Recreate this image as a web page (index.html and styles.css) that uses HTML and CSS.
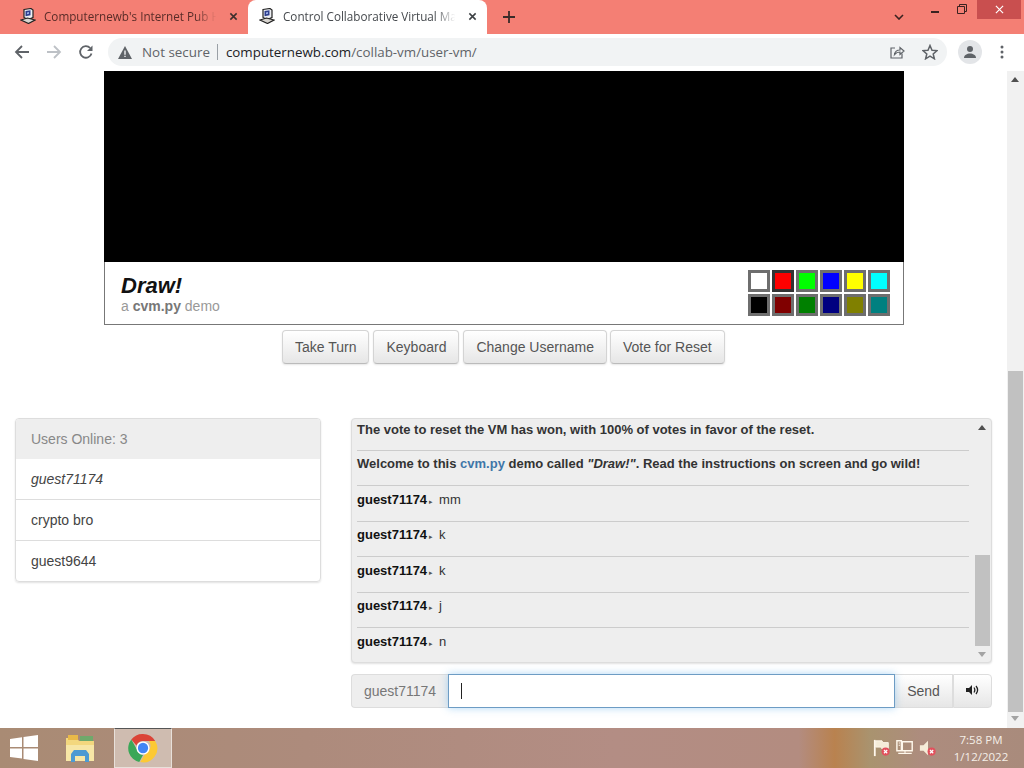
FILE: index.html
```html
<!DOCTYPE html>
<html lang="en">
<head>
    <meta charset="UTF-8">
    <title>Control Collaborative Virtual Machine</title>
    <link rel="stylesheet" href="styles.css">
</head>
<body>
    <div class="tabstrip">
        <div class="tab">
            <svg class="favicon" viewBox="0 0 16 16"><path d="M4 1.500 11 .5l2 1.500v7.500L8 11.500 4 9.500z" fill="#eef0f4" stroke="#222" stroke-width="1.200"/><path d="M5.500 3 10.500 2.300v5L5.500 8.300z" fill="#2f3f8f"/><path d="M7 4.500 9 4v1.800L7 6.300z" fill="#9fb4ea"/><path d="M1 12 7.500 10l7.500 2-6.500 3.500z" fill="#d9d5d0" stroke="#222" stroke-width="1.200"/></svg>
            <span class="tab-title">Computernewb's Internet Pub H</span>
            <svg class="tab-close" viewBox="0 0 10 10"><path d="M1.500 1.500l7 7M8.500 1.500l-7 7" stroke="#3c2f2d" stroke-width="1.700"/></svg>
        </div>
        <div class="tab tab-active">
            <svg class="favicon" viewBox="0 0 16 16"><path d="M4 1.500 11 .5l2 1.500v7.500L8 11.500 4 9.500z" fill="#eef0f4" stroke="#222" stroke-width="1.200"/><path d="M5.500 3 10.500 2.300v5L5.500 8.300z" fill="#2f3f8f"/><path d="M7 4.500 9 4v1.800L7 6.300z" fill="#9fb4ea"/><path d="M1 12 7.500 10l7.500 2-6.500 3.500z" fill="#d9d5d0" stroke="#222" stroke-width="1.200"/></svg>
            <span class="tab-title">Control Collaborative Virtual Ma</span>
            <svg class="tab-close" viewBox="0 0 10 10"><path d="M1.500 1.500l7 7M8.500 1.500l-7 7" stroke="#3c4043" stroke-width="1.700"/></svg>
        </div>
        <svg class="new-tab" viewBox="0 0 12 12"><path d="M6 0v12M0 6h12" stroke="#3a2b29" stroke-width="1.800"/></svg>
        <div class="window-controls">
            <svg class="tab-search" viewBox="0 0 10 6"><path d="M1 1l4 4 4-4" fill="none" stroke="#3a2220" stroke-width="1.600"/></svg>
            <svg class="win-min" viewBox="0 0 8 2"><path d="M0 1h8" stroke="#3a2220" stroke-width="2"/></svg>
            <svg class="win-restore" viewBox="0 0 10 10"><path d="M.5 2.500h7v7h-7zM2.500 2.500v-2h7v7h-2" fill="none" stroke="#3a2220"/></svg>
            <div class="win-close"><svg viewBox="0 0 10 10"><path d="M1 1l8 8M9 1l-8 8" stroke="#fff" stroke-width="1.300"/></svg></div>
        </div>
    </div>

    <div class="toolbar">
        <svg class="nav-icon" viewBox="0 0 16 16"><path d="M15 8H2M8 2 2 8l6 6" fill="none" stroke="#5f6368" stroke-width="1.800"/></svg>
        <svg class="nav-icon" viewBox="0 0 16 16"><path d="M1 8h13M8 2l6 6-6 6" fill="none" stroke="#bdc1c6" stroke-width="1.800"/></svg>
        <svg class="nav-icon" viewBox="0 0 16 16"><path d="M13.500 9.500A5.800 5.800 0 1 1 12.200 4" fill="none" stroke="#5f6368" stroke-width="1.800"/><path d="M14.500 1.500v5.500H9z" fill="#5f6368"/></svg>
        <div class="omnibox">
            <svg class="warn-icon" viewBox="0 0 14 13"><path d="M7 0 14 13H0z" fill="#5f6368"/><path d="M6.300 4.500h1.400v4.200H6.300zM6.300 9.700h1.400v1.400H6.300z" fill="#f1f3f4"/></svg>
            <span class="not-secure">Not secure</span>
            <span class="omni-sep"></span>
            <span class="url">computernewb.com<span class="url-path">/collab-vm/user-vm/</span></span>
            <svg class="share-icon" viewBox="0 0 16 16"><path d="M13 9.500V14H2V4h4" fill="none" stroke="#5f6368" stroke-width="1.200"/><path d="M5.500 10.500C6 7.500 8 6 11 6V3.500L15 7l-4 3.500V8c-2.200 0-4 .8-5.500 2.500z" fill="none" stroke="#5f6368" stroke-width="1.200"/></svg>
            <svg class="star-icon" viewBox="0 0 16 16"><path d="M8 1.500 10 6.200l5 .4-3.800 3.300 1.200 4.900L8 12.200l-4.400 2.600 1.200-4.900L1 6.600l5-.4z" fill="none" stroke="#5f6368" stroke-width="1.500"/></svg>
        </div>
        <div class="avatar"><svg viewBox="0 0 14 14"><circle cx="7" cy="4" r="3" fill="#5f6368"/><path d="M1 13c0-3 3-4.500 6-4.500s6 1.500 6 4.500z" fill="#5f6368"/></svg></div>
        <svg class="menu-icon" viewBox="0 0 4 14"><circle cx="2" cy="2" r="1.500" fill="#5f6368"/><circle cx="2" cy="7" r="1.500" fill="#5f6368"/><circle cx="2" cy="12" r="1.500" fill="#5f6368"/></svg>
    </div>

    <div class="viewport">
        <div class="page">
            <div class="vm-wrap">
                <div class="vm-screen"></div>
                <div class="vm-info">
                    <div>
                        <div class="vm-title">Draw!</div>
                        <div class="vm-sub">a <b>cvm.py</b> demo</div>
                    </div>
                    <div class="palette">
                        <span class="swatch sw-white"></span>
                        <span class="swatch sw-red"></span>
                        <span class="swatch sw-lime"></span>
                        <span class="swatch sw-blue"></span>
                        <span class="swatch sw-yellow"></span>
                        <span class="swatch sw-cyan"></span>
                        <span class="swatch sw-black"></span>
                        <span class="swatch sw-maroon"></span>
                        <span class="swatch sw-green"></span>
                        <span class="swatch sw-navy"></span>
                        <span class="swatch sw-olive"></span>
                        <span class="swatch sw-teal"></span>
                    </div>
                </div>
            </div>

            <div class="vm-buttons">
                <button class="btn">Take Turn</button>
                <button class="btn">Keyboard</button>
                <button class="btn">Change Username</button>
                <button class="btn btn-last">Vote for Reset</button>
            </div>

            <div class="lower">
                <div class="users">
                    <div class="users-head">Users Online: 3</div>
                    <div class="user-row user-me">guest71174</div>
                    <div class="user-row">crypto bro</div>
                    <div class="user-row">guest9644</div>
                </div>

                <div class="chat">
                    <div class="chat-log">
                        <div class="chat-messages">
                            <div class="msg msg-first"><b>The vote to reset the VM has won, with 100% of votes in favor of the reset.</b></div>
                            <div class="msg"><b>Welcome to this <a class="cvm-link">cvm.py</a> demo called <i>"Draw!"</i>. Read the instructions on screen and go wild!</b></div>
                            <div class="msg"><b class="nick">guest71174</b><span class="arrow">▸</span>mm</div>
                            <div class="msg"><b class="nick">guest71174</b><span class="arrow">▸</span>k</div>
                            <div class="msg"><b class="nick">guest71174</b><span class="arrow">▸</span>k</div>
                            <div class="msg"><b class="nick">guest71174</b><span class="arrow">▸</span>j</div>
                            <div class="msg"><b class="nick">guest71174</b><span class="arrow">▸</span>n</div>
                        </div>
                        <div class="chat-scroll">
                            <span class="scroll-up"></span>
                            <span class="chat-thumb"></span>
                            <span class="scroll-down"></span>
                        </div>
                    </div>
                    <div class="chat-input">
                        <span class="input-name">guest71174</span>
                        <div class="input-box"><span class="caret"></span></div>
                        <button class="input-btn input-send">Send</button>
                        <button class="input-btn input-sound">
                            <svg viewBox="0 0 14 10"><path d="M0 3h3l3-3v10L3 7H0z" fill="#222"/><path d="M8 2.500c1 1.500 1 3.500 0 5M10 1c2 2.500 2 5.500 0 8" fill="none" stroke="#222" stroke-width="1.300"/></svg>
                        </button>
                    </div>
                </div>
            </div>
        </div>
        <div class="page-scroll">
            <span class="scroll-up"></span>
            <span class="page-thumb"></span>
            <span class="scroll-down"></span>
        </div>
    </div>

    <div class="taskbar">
        <svg class="start" viewBox="0 0 28 26"><path d="M0 4l12-1.700V12H0zM13.500 2 28 0v12H13.500zM0 13.500h12v10L0 22zM13.500 13.500H28V26l-14.500-2z" fill="#fff"/></svg>
        <div class="task-item">
            <svg viewBox="0 0 30 30"><path d="M1 5h11l2 3h15v20H1z" fill="#f3d77e"/><path d="M3 2h10v5H3z" fill="#e9b949"/><path d="M15 3h13v5H15z" fill="#6fa96b"/><path d="M1 12h28v16H1z" fill="#f7e6a6"/><path d="M6 29v-8l3-4h12l3 4v8h-4v-6H10v6z" fill="#4d9ad2"/></svg>
        </div>
        <div class="task-item task-active">
            <svg viewBox="0 0 32 32">
                <path d="M16 1a15 15 0 0 1 13 7.500H16a7.500 7.500 0 0 0-7 4.800L3.500 7A15 15 0 0 1 16 1z" fill="#db4437"/>
                <path d="M3.500 7 9.800 18A7.500 7.500 0 0 0 16 23.500L12 31A15 15 0 0 1 3.500 7z" fill="#3aa757"/>
                <path d="M29 8.500A15 15 0 0 1 13 31l6.500-10.500A7.500 7.500 0 0 0 22 8.500z" fill="#fcc934"/>
                <circle cx="16" cy="16" r="7" fill="#fff"/>
                <circle cx="16" cy="16" r="5.500" fill="#4285f4"/>
            </svg>
        </div>
        <div class="tray">
            <svg class="tray-icon" viewBox="0 0 20 20"><path d="M2 1v18" stroke="#fff8ec" stroke-width="2"/><path d="M3 2h7l1 2h6v7h-7l-1-2H3z" fill="#f5ecd8" stroke="#fff8ec"/><circle cx="14" cy="14" r="4.500" fill="#e2505c"/><path d="M12.200 12.200l3.600 3.600M15.800 12.200l-3.600 3.600" stroke="#fff" stroke-width="1.300"/></svg>
            <svg class="tray-icon" viewBox="0 0 20 20"><path d="M7 3h11v10H7zM1 2h5v11H1zM2.500 16h15" fill="none" stroke="#fff8ec" stroke-width="1.600"/><path d="M10 13v3M3 4.500h1.500M3 7h1.500" stroke="#fff8ec" stroke-width="1.200"/></svg>
            <svg class="tray-icon" viewBox="0 0 20 20"><path d="M1 7h4l5-5v16l-5-5H1z" fill="#f5ecd8"/><circle cx="14" cy="14" r="4.500" fill="#e2505c"/><path d="M12.200 12.200l3.600 3.600M15.800 12.200l-3.600 3.600" stroke="#fff" stroke-width="1.300"/></svg>
            <div class="clock"><div>7:58 PM</div><div>1/12/2022</div></div>
        </div>
    </div>
</body>
</html>
```
FILE: styles.css
```css
* {
    box-sizing: border-box;
}

html, body {
    margin: 0;
    padding: 0;
}

body {
    width: 1024px;
    height: 768px;
    overflow: hidden;
    display: flex;
    flex-direction: column;
    font-family: "Liberation Sans", Arial, sans-serif;
    background-color: #fff;
}

svg {
    display: block;
}

/* browser chrome */
.tabstrip {
    height: 34px;
    flex: none;
    display: flex;
    align-items: flex-end;
    padding-left: 8px;
    background-color: #f47f74;
}

.tab {
    width: 238px;
    height: 34px;
    margin-right: 2px;
    display: flex;
    align-items: center;
    padding: 0 11px 2px 12px;
    font-family: "Open Sans", sans-serif;
    font-size: 11.700px;
    color: #5a2c28;
}

.tab-active {
    width: 239px;
    padding: 0 10px 2px 11px;
    border-radius: 8px 8px 0 0;
    background-color: #fff;
    color: #45494d;
}

.favicon {
    width: 16px;
    height: 16px;
    flex: none;
}

.tab-title {
    flex: 1;
    margin-left: 8px;
    white-space: nowrap;
    -webkit-mask-image: linear-gradient(90deg, #000 86%, transparent 98%);
    mask-image: linear-gradient(90deg, #000 86%, transparent 98%);
}

.tab-close {
    width: 9px;
    height: 9px;
    flex: none;
    margin-left: 9px;
}

.new-tab {
    width: 12px;
    height: 12px;
    margin: 0 0 11px 14px;
}

.window-controls {
    margin-left: auto;
    height: 34px;
    display: flex;
    align-items: flex-start;
}

.tab-search {
    width: 10px;
    height: 6px;
    margin: 14px 27px 0 0;
}

.win-min {
    width: 8px;
    height: 2px;
    margin: 11px 18px 0 0;
}

.win-restore {
    width: 10px;
    height: 10px;
    margin: 4px 10px 0 0;
}

.win-close {
    width: 44px;
    height: 19px;
    margin-right: 3px;
    display: flex;
    align-items: center;
    justify-content: center;
    background-color: #c94f4f;
}

.win-close svg {
    width: 9px;
    height: 9px;
}

.toolbar {
    height: 37px;
    flex: none;
    display: flex;
    align-items: center;
    padding: 0 0 1px 14px;
    background-color: #fff;
}

.nav-icon {
    width: 16px;
    height: 16px;
    margin-right: 16px;
}

.omnibox {
    width: 839px;
    height: 28px;
    margin-left: -2px;
    display: flex;
    align-items: center;
    padding: 0 9px 0 10px;
    border-radius: 14px;
    background-color: #f1f3f4;
    font-family: "Open Sans", sans-serif;
    font-size: 14px;
}

.warn-icon {
    width: 14px;
    height: 13px;
}

.not-secure {
    margin-left: 10px;
    font-size: 13.400px;
    color: #5f6368;
}

.omni-sep {
    width: 1px;
    height: 16px;
    margin: 0 8px 0 7px;
    background-color: #9aa0a6;
}

.url {
    font-size: 13.350px;
    color: #202124;
}

.url-path {
    color: #5f6368;
}

.share-icon {
    width: 16px;
    height: 16px;
    margin-left: auto;
}

.star-icon {
    width: 16px;
    height: 16px;
    margin-left: 17px;
}

.avatar {
    width: 24px;
    height: 24px;
    margin-left: 11px;
    display: flex;
    align-items: center;
    justify-content: center;
    border-radius: 50%;
    background-color: #e3e5e8;
}

.avatar svg {
    width: 14px;
    height: 14px;
}

.menu-icon {
    width: 4px;
    height: 14px;
    margin-left: 18px;
}

/* page */
.viewport {
    height: 657px;
    flex: none;
    display: flex;
    overflow: hidden;
}

.page {
    width: 1007px;
    flex: none;
}

.vm-wrap {
    width: 800px;
    margin-left: 104px;
}

.vm-screen {
    height: 191px;
    background-color: #000;
}

.vm-info {
    height: 63px;
    display: flex;
    justify-content: space-between;
    align-items: flex-start;
    padding: 8px 13px 0 16px;
    border: 1px solid #777;
    border-top: none;
    background-color: #fff;
}

.vm-title {
    margin-top: 3px;
    font-size: 22px;
    line-height: 25px;
    font-weight: bold;
    font-style: italic;
    color: #111;
}

.vm-sub {
    font-size: 14px;
    line-height: 16px;
    color: #999;
}

.vm-sub b {
    color: #777;
}

.palette {
    display: grid;
    grid-template-columns: repeat(6, 22px);
    grid-auto-rows: 22px;
    gap: 2px;
}

.swatch {
    border: 3px solid #6e6e6e;
}

.sw-white { background-color: #fff; }
.sw-red { background-color: #f00; border-color: #333; }
.sw-lime { background-color: #0f0; }
.sw-blue { background-color: #00f; }
.sw-yellow { background-color: #ff0; }
.sw-cyan { background-color: #0ff; }
.sw-black { background-color: #000; }
.sw-maroon { background-color: #800000; }
.sw-green { background-color: #008000; }
.sw-navy { background-color: #000080; }
.sw-olive { background-color: #808000; }
.sw-teal { background-color: #008080; }

.vm-buttons {
    display: flex;
    gap: 4px;
    margin: 5px 0 0 282px;
}

.btn {
    height: 34px;
    padding: 0 12px;
    border: 1px solid #d4d4d4;
    border-bottom-color: #bbb;
    border-radius: 4px;
    background: linear-gradient(#fff, #e6e6e6);
    box-shadow: 0 1px 2px rgba(0, 0, 0, 0.1);
    font-family: "Liberation Sans", Arial, sans-serif;
    font-size: 14px;
    color: #555;
}

.btn-last {
    margin-left: -1px;
}

.lower {
    display: flex;
    align-items: flex-start;
    margin: 54px 15px 0;
    gap: 30px;
}

.users {
    width: 306px;
    flex: none;
    border: 1px solid #ddd;
    border-radius: 4px;
    box-shadow: 0 1px 2px rgba(0, 0, 0, 0.12);
    overflow: hidden;
    font-size: 14px;
}

.users-head {
    height: 40px;
    line-height: 40px;
    padding-left: 15px;
    background-color: #eee;
    color: #888;
}

.user-row {
    height: 41px;
    line-height: 40px;
    padding-left: 15px;
    border-bottom: 1px solid #ddd;
    color: #444;
}

.user-row:last-child {
    height: 40px;
    border-bottom: none;
}

.user-me {
    font-style: italic;
}

.chat {
    width: 641px;
    flex: none;
}

.chat-log {
    height: 245px;
    display: flex;
    border: 1px solid #ddd;
    border-radius: 4px;
    background-color: #eee;
    box-shadow: 0 1px 2px rgba(0, 0, 0, 0.12);
    overflow: hidden;
}

.chat-messages {
    flex: 1;
    padding: 0 6px 0 5px;
    font-size: 13px;
    color: #333;
}

.msg {
    height: 35.500px;
    padding-top: 3.500px;
    line-height: 20px;
    border-bottom: 1px solid #ccc;
    white-space: nowrap;
}

.msg-first {
    height: 31.500px;
    padding-top: 1px;
}

.msg:last-child {
    border-bottom-color: #bbb;
}

.nick {
    color: #111;
}

.arrow {
    margin: 0 6px 0 2px;
    font-size: 7px;
    color: #555;
}

.cvm-link {
    color: #3f76a8;
}

.chat-scroll {
    width: 15px;
    margin-right: 1px;
    flex: none;
    position: relative;
}

.chat-thumb {
    position: absolute;
    top: 136px;
    left: 0;
    width: 15px;
    height: 91px;
    background-color: #c1c1c1;
}

.scroll-up,
.scroll-down {
    position: absolute;
    left: 3px;
    width: 0;
    height: 0;
    border-left: 4px solid transparent;
    border-right: 4px solid transparent;
}

.scroll-up {
    top: 6px;
    border-bottom: 5px solid #505050;
}

.scroll-down {
    bottom: 5px;
    border-top: 5px solid #a3a3a3;
}

.chat-input {
    height: 34px;
    margin-top: 11px;
    display: flex;
    font-size: 14px;
}

.input-name {
    width: 97px;
    line-height: 32px;
    text-align: center;
    border: 1px solid #ddd;
    border-right: none;
    border-radius: 4px 0 0 4px;
    background-color: #eee;
    color: #777;
}

.input-box {
    width: 447px;
    display: flex;
    align-items: center;
    padding-left: 12px;
    border: 1px solid #6d9cc4;
    background-color: #fff;
    box-shadow: 0 0 8px rgba(82, 168, 236, 0.45);
    position: relative;
}

.caret {
    width: 1px;
    height: 16px;
    background-color: #222;
}

.input-btn {
    height: 34px;
    border: 1px solid #ddd;
    background: linear-gradient(#fff, #e6e6e6);
    font-family: "Liberation Sans", Arial, sans-serif;
    font-size: 14px;
    color: #555;
}

.input-send {
    width: 58px;
    border-left: none;
    padding: 0;
}

.input-sound {
    width: 39px;
    border-left: 1px solid #ddd;
    border-radius: 0 4px 4px 0;
    display: flex;
    align-items: center;
    justify-content: center;
    padding: 0 0 2px;
}

.input-sound svg {
    width: 14px;
    height: 10px;
}

.page-scroll {
    width: 17px;
    flex: none;
    position: relative;
    background-color: #f1f1f1;
}

.page-thumb {
    position: absolute;
    top: 300px;
    left: 1px;
    width: 15px;
    height: 341px;
    background-color: #c1c1c1;
}

.page-scroll .scroll-up {
    left: 4px;
}

.page-scroll .scroll-down {
    left: 4px;
    bottom: 7px;
}

/* windows taskbar */
.taskbar {
    height: 40px;
    flex: none;
    display: flex;
    align-items: center;
    background: linear-gradient(90deg, #a98b74 0, #ad8b7c 30%, #b38d84 60%, #b38c80 78%, #b9824f 81.500%, #a9936f 85%, #ad8c7e 90%, #a98b7c 100%);
}

.start {
    width: 28px;
    height: 26px;
    margin-left: 10px;
}

.task-item {
    width: 58px;
    height: 40px;
    display: flex;
    align-items: center;
    justify-content: center;
}

.task-item svg {
    width: 30px;
    height: 30px;
}

.taskbar > .task-item:nth-child(2) {
    margin-left: 13px;
}

.task-active {
    margin-left: 5px;
    border: 1px solid #e8e0da;
    border-top-color: #555;
    background-color: #cfbcb0;
}

.tray {
    margin-left: auto;
    display: flex;
    align-items: center;
}

.tray-icon {
    width: 18px;
    height: 18px;
    margin-right: 5px;
}

.clock {
    width: 68px;
    margin: 0 9px 0 5px;
    font-family: "Open Sans", sans-serif;
    font-size: 11.500px;
    line-height: 17px;
    text-align: center;
    color: #f5efe8;
}
```
